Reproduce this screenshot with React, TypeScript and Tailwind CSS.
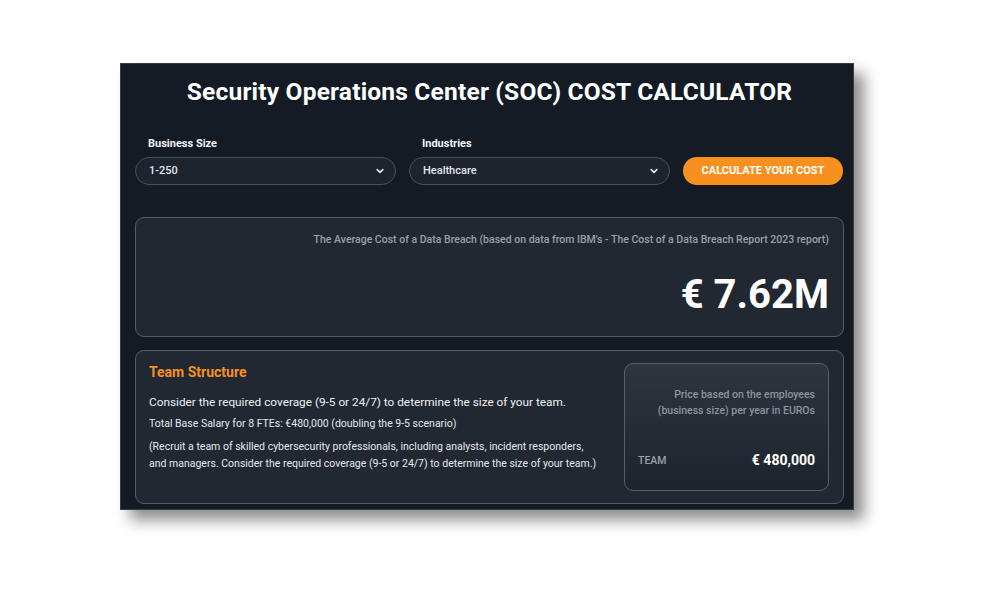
import React from "react";

function Chevron() {
  return (
    <svg width="10" height="10" viewBox="0 0 10 10" fill="none" className="shrink-0">
      <path d="M2.2 3.6 L5 6.4 L7.8 3.6" stroke="#e5e7eb" strokeWidth="1.6" strokeLinecap="round" strokeLinejoin="round" />
    </svg>
  );
}

function Select({ value }: { value: string }) {
  return (
    <div className="flex h-[28px] items-center justify-between rounded-full border border-[#4a5059] bg-[#1d242d] pl-[13px] pr-[10px] text-[11px] font-medium text-[#e5e7eb]">
      <span>{value}</span>
      <Chevron />
    </div>
  );
}

export default function App() {
  return (
    <div
      className="h-[600px] w-[1000px] bg-white pl-[120px] pt-[63px]"
      style={{ fontFamily: "Roboto, 'Liberation Sans', sans-serif" }}
    >
      <div className="flex h-[447px] w-[734px] flex-col border border-[#363c44] bg-[#141b24] pl-[14px] pr-[9px] pt-[12px] shadow-[10px_10px_14px_rgba(0,0,0,0.45)]">
        <h1 className="text-center text-[24.5px] font-bold leading-[32px] tracking-[0.2px] text-white">
          Security Operations Center (SOC) COST CALCULATOR
        </h1>

        <div className="mt-[29px] grid grid-cols-[261px_261px_160px] gap-x-[13px]">
          <div className="flex flex-col">
            <div className="mb-[6px] pl-[13px] text-[11px] font-bold leading-[14px] text-[#f3f4f6]">Business Size</div>
            <Select value="1-250" />
          </div>
          <div className="flex flex-col">
            <div className="mb-[6px] pl-[13px] text-[11px] font-bold leading-[14px] text-[#f3f4f6]">Industries</div>
            <Select value="Healthcare" />
          </div>
          <div className="flex flex-col justify-end">
            <button className="flex h-[28px] items-center justify-center rounded-full bg-[#f7901e] text-[11px] font-bold uppercase text-white">
              Calculate your cost
            </button>
          </div>
        </div>

        <div className="mt-[32px] flex h-[120px] flex-col items-end rounded-[9px] border border-[#575d65] bg-[#212832] px-[14px] pt-[14px]">
          <div className="text-[10.5px] font-medium leading-[16px] text-[#99a0a9]">
            The Average Cost of a Data Breach (based on data from IBM's - The Cost of a Data Breach Report 2023 report)
          </div>
          <div className="mt-[23px] text-[40px] font-bold leading-[48px] text-white">€ 7.62M</div>
        </div>

        <div className="mt-[13px] flex h-[154px] rounded-[9px] border border-[#575d65] bg-[#212832] py-[12px] pl-[13px] pr-[14px]">
          <div className="flex-1 pr-[22px]">
            <div className="text-[14px] font-bold leading-[18px] text-[#f7901e]">Team Structure</div>
            <div className="mt-[12px] text-[11.8px] leading-[18px] text-[#eef0f2]">
              Consider the required coverage (9-5 or 24/7) to determine the size of your team.
            </div>
            <div className="mt-[5px] text-[10.5px] leading-[16px] text-[#e5e7eb]">
              Total Base Salary for 8 FTEs: €480,000 (doubling the 9-5 scenario)
            </div>
            <div className="mt-[6px] text-[10.5px] leading-[17px] text-[#e5e7eb]">
              (Recruit a team of skilled cybersecurity professionals, including analysts, incident responders, and managers. Consider the required coverage (9-5 or 24/7) to determine the size of your team.)
            </div>
          </div>
          <div className="flex w-[205px] flex-col justify-between rounded-[9px] border border-[#595f67] bg-gradient-to-b from-[#2e353f] to-[#1d242d] px-[13px] pb-[19px] pt-[23px]">
            <div className="text-right text-[10.5px] font-medium leading-[15.5px] text-[#8d949d]">
              Price based on the employees
              <br />
              (business size) per year in EUROs
            </div>
            <div className="flex items-center justify-between">
              <span className="text-[10.5px] font-medium text-[#9aa1aa]">TEAM</span>
              <span className="text-[14px] font-bold text-white">€ 480,000</span>
            </div>
          </div>
        </div>
      </div>
    </div>
  );
}
